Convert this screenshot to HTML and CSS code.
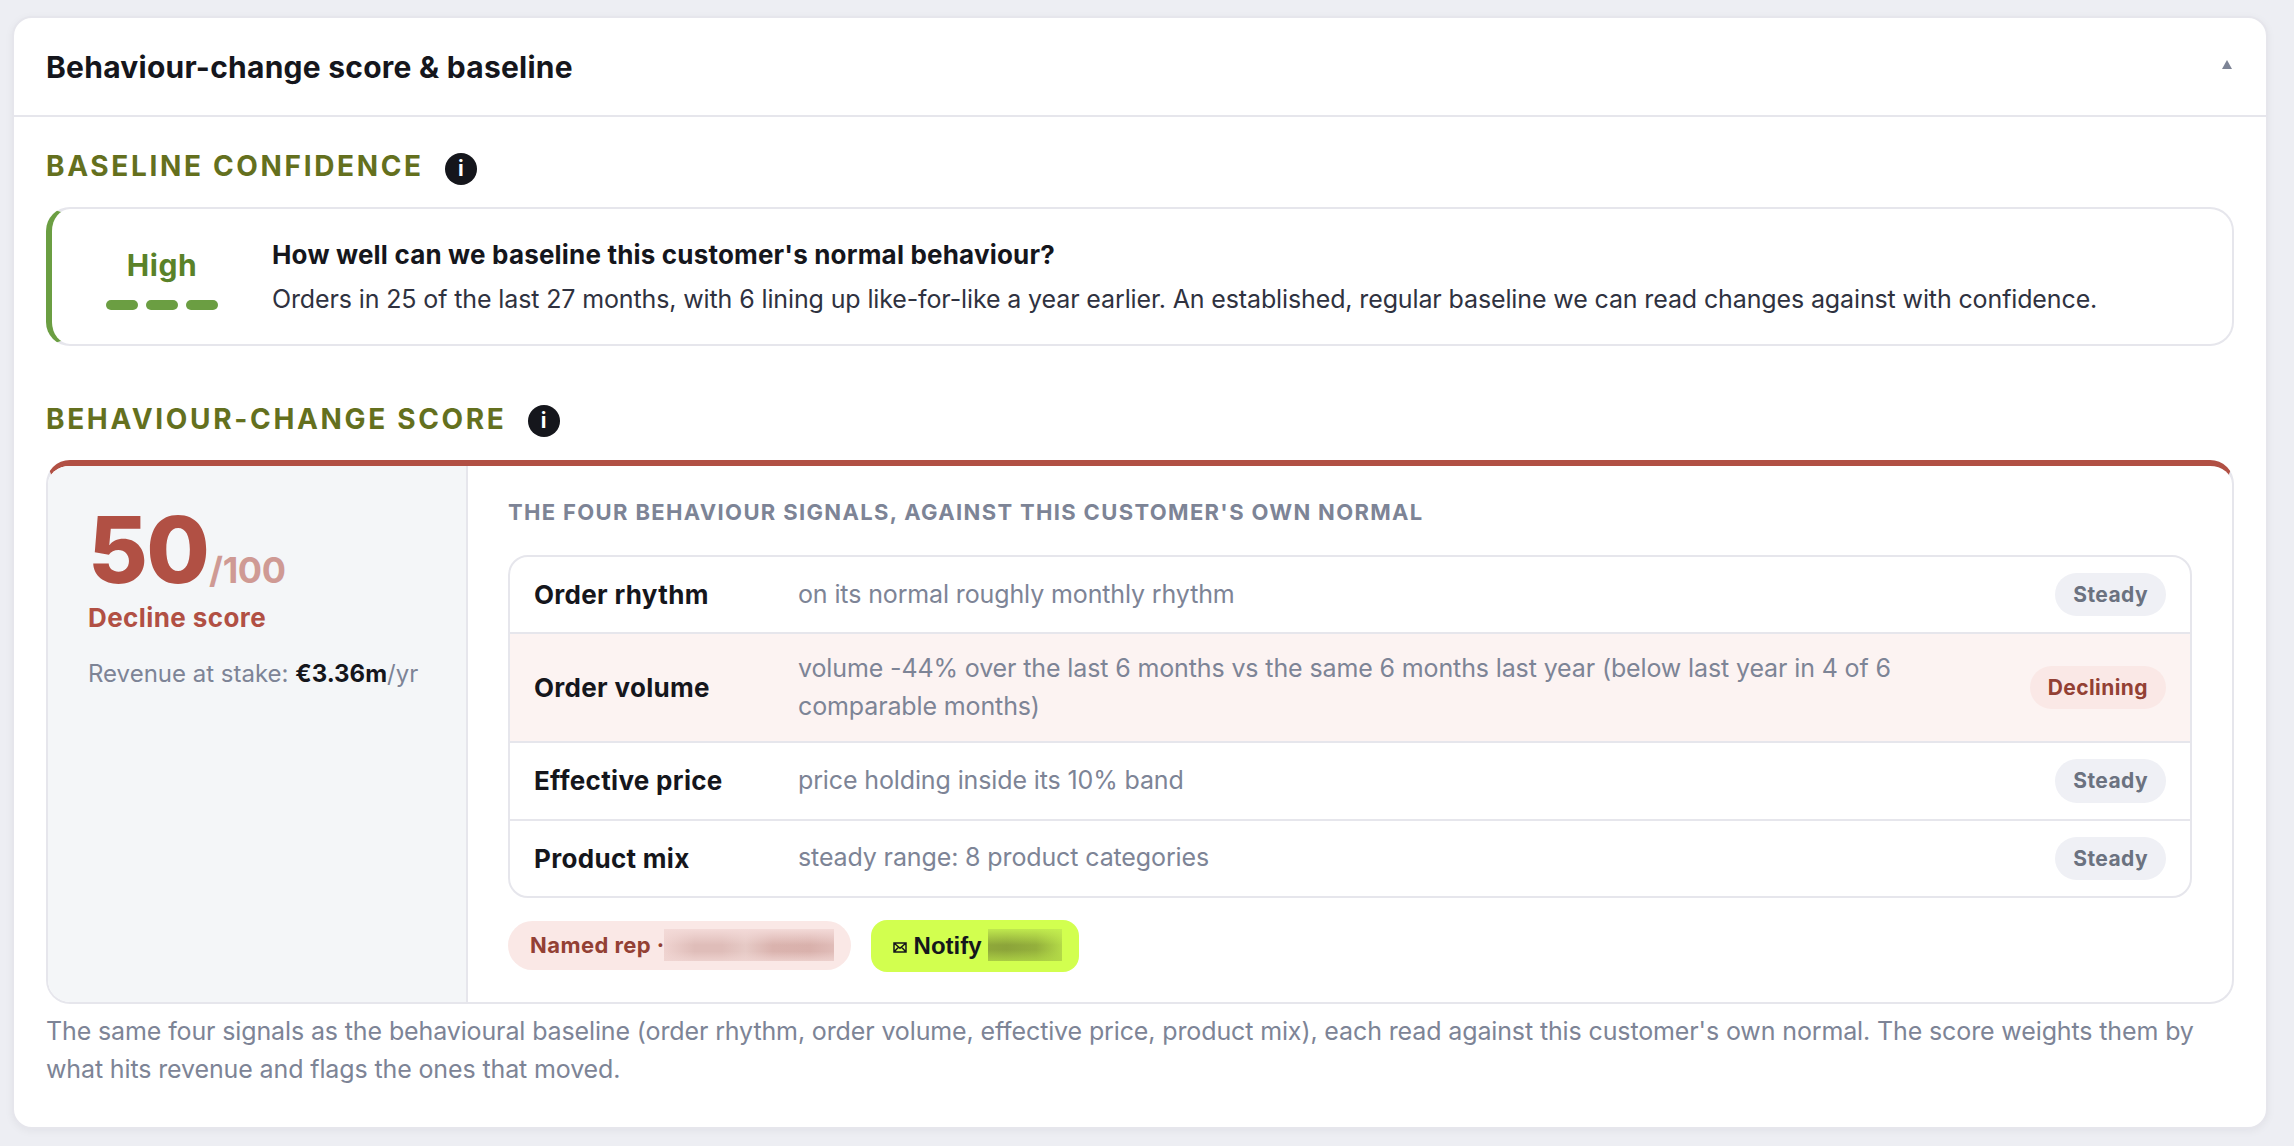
FILE: index.html
```
<!DOCTYPE html>
<html lang="en">
<head>
  <meta charset="UTF-8">
  <meta name="viewport" content="width=device-width, initial-scale=1.0">
  <title>Behaviour-change score &amp; baseline</title>
  <link rel="stylesheet" href="styles.css">
</head>
<body>
  <div class="card">
    <div class="card-header">
      <h2>Behaviour-change score &amp; baseline</h2>
      <svg class="caret" viewBox="0 0 10 9"><path d="M5 0L10 9H0z"/></svg>
    </div>

    <div class="card-content">
      <!-- Baseline confidence -->
      <div class="section-head">
        <h3>Baseline confidence</h3>
        <span class="info">i</span>
      </div>
      <div class="confidence">
        <div class="confidence-level">
          <span class="level-name">High</span>
          <div class="level-bars"><i></i><i></i><i></i></div>
        </div>
        <div class="confidence-text">
          <h4>How well can we baseline this customer's normal behaviour?</h4>
          <p>Orders in 25 of the last 27 months, with 6 lining up like-for-like a year earlier. An established, regular baseline we can read changes against with confidence.</p>
        </div>
      </div>

      <!-- Behaviour-change score -->
      <div class="section-head section-head-score">
        <h3>Behaviour-change score</h3>
        <span class="info">i</span>
      </div>
      <div class="score">
        <div class="score-side">
          <div class="score-value">50<span>/100</span></div>
          <div class="score-label">Decline score</div>
          <div class="score-stake">Revenue at stake: <b>€3.36m</b>/yr</div>
        </div>
        <div class="score-main">
          <h5>The four behaviour signals, against this customer's own normal</h5>
          <div class="signals">
            <div class="signal">
              <span class="signal-name">Order rhythm</span>
              <span class="signal-desc">on its normal roughly monthly rhythm</span>
              <span class="pill">Steady</span>
            </div>
            <div class="signal signal-down">
              <span class="signal-name">Order volume</span>
              <span class="signal-desc">volume -44% over the last 6 months vs the same 6 months last year (below last year in 4 of 6 comparable months)</span>
              <span class="pill pill-down">Declining</span>
            </div>
            <div class="signal">
              <span class="signal-name">Effective price</span>
              <span class="signal-desc">price holding inside its 10% band</span>
              <span class="pill">Steady</span>
            </div>
            <div class="signal">
              <span class="signal-name">Product mix</span>
              <span class="signal-desc">steady range: 8 product categories</span>
              <span class="pill">Steady</span>
            </div>
          </div>
          <div class="actions">
            <span class="rep">Named rep ·<span class="redacted redacted-rep"></span></span>
            <button class="notify">
              <svg class="mail" viewBox="0 0 14 11"><path d="M1 1h12v9H1zM1 1l6 5.2L13 1M1 10l4.6-5M13 10L8.4 5"/></svg>
              Notify
              <span class="redacted redacted-notify"></span>
            </button>
          </div>
        </div>
      </div>
      <p class="footnote">The same four signals as the behavioural baseline (order rhythm, order volume, effective price, product mix), each read against this customer's own normal. The score weights them by what hits revenue and flags the ones that moved.</p>
    </div>
  </div>
</body>
</html>
```
FILE: styles.css
```
* {
  box-sizing: border-box;
}

body {
  margin: 0;
  padding: 16px 26px 17px 12px;
  background: #edeef3;
  color: #15161c;
  font-family: Inter, "Liberation Sans", sans-serif;
  font-size: 25px;
  line-height: 1.5;
}

h2, h3, h4, h5, p {
  margin: 0;
}

.card {
  background: #fff;
  border: 2px solid #e6e6ec;
  border-radius: 20px;
  box-shadow: 0 2px 8px rgba(20, 22, 40, 0.05);
}

.card-header {
  display: flex;
  justify-content: space-between;
  align-items: center;
  height: 99px;
  padding: 0 34px 0 32px;
  border-bottom: 2px solid #e6e6ec;
}

.card-header h2 {
  padding-top: 2px;
  font-size: 30px;
  font-weight: 700;
  letter-spacing: 0.25px;
}

.caret {
  width: 10px;
  height: 9px;
  margin-bottom: 5px;
  fill: #7d8496;
}

.card-content {
  padding: 27px 32px 39px;
}

.section-head {
  display: flex;
  align-items: center;
  gap: 21px;
  height: 44px;
  margin-bottom: 19px;
}

.section-head-score {
  margin-top: 51px;
}

.section-head h3 {
  font-size: 28px;
  font-weight: 700;
  letter-spacing: 0.095em;
  text-transform: uppercase;
  color: #64701e;
}

.info {
  width: 32px;
  height: 32px;
  margin-top: 6px;
  border-radius: 50%;
  background: #15161c;
  color: #fff;
  font-size: 21px;
  font-weight: 700;
  line-height: 31px;
  text-align: center;
}

.section-head-score .info {
  margin-top: 4px;
}

.confidence {
  display: flex;
  align-items: center;
  gap: 36px;
  height: 139px;
  padding: 0 36px;
  border: 2px solid #e6e6ec;
  border-left: 6px solid #6b9e42;
  border-radius: 24px;
}

.confidence-level {
  display: flex;
  flex-direction: column;
  align-items: center;
  gap: 12px;
  width: 148px;
}

.level-name {
  font-size: 30px;
  font-weight: 700;
  letter-spacing: 0.02em;
  color: #5a8229;
}

.level-bars {
  display: flex;
  gap: 8px;
}

.level-bars i {
  width: 32px;
  height: 10px;
  border-radius: 5px;
  background: #6b9e42;
}

.confidence-text h4 {
  margin-bottom: 7px;
  font-size: 26px;
  font-weight: 700;
  letter-spacing: 0.007em;
}

.confidence-text p {
  letter-spacing: -0.005em;
  color: #2f3240;
}

.score {
  display: flex;
  height: 544px;
  border: 2px solid #e6e6ec;
  border-top: 6px solid #b15044;
  border-radius: 24px;
  overflow: hidden;
}

.score-side {
  width: 420px;
  padding: 38px 40px;
  border-right: 2px solid #e6e6ec;
  background: #f4f6f8;
}

.score-value {
  height: 92px;
  margin-bottom: 2px;
  font-size: 92px;
  font-weight: 800;
  line-height: 1;
  letter-spacing: -0.02em;
  color: #b15044;
}

.score-value span {
  margin-left: 1px;
  font-size: 36px;
  font-weight: 700;
  letter-spacing: -0.3px;
  opacity: 0.55;
}

.score-label {
  margin-bottom: 19px;
  font-size: 26px;
  font-weight: 700;
  letter-spacing: 0.016em;
  color: #b15044;
}

.score-stake {
  font-size: 24px;
  color: #7d8496;
  white-space: nowrap;
}

.score-stake b {
  color: #15161c;
}

.score-main {
  flex: 1;
  padding: 30px 40px 30px;
}

.score-main h5 {
  margin-bottom: 26px;
  font-size: 22px;
  font-weight: 700;
  letter-spacing: 0.061em;
  text-transform: uppercase;
  color: #7d8496;
}

.signals {
  border: 2px solid #e6e6ec;
  border-radius: 20px;
  overflow: hidden;
}

.signal {
  display: grid;
  grid-template-columns: 240px 1fr auto;
  gap: 24px;
  align-items: center;
  padding: 16px 24px;
}

.signal + .signal {
  border-top: 2px solid #e6e6ec;
}

.signal-down {
  background: #fcf3f2;
}

.signal-name {
  font-size: 26px;
  font-weight: 700;
  line-height: 39px;
  letter-spacing: 0.012em;
}

.signal-desc {
  letter-spacing: -0.005em;
  color: #7d8496;
}

.pill {
  padding: 6px 18px;
  border-radius: 22px;
  background: #eff0f5;
  color: #6b7280;
  font-size: 21px;
  font-weight: 700;
  line-height: 31.3px;
  letter-spacing: 0.02em;
}

.pill-down {
  background: #fae8e6;
  color: #934034;
}

.actions {
  display: flex;
  align-items: center;
  gap: 20px;
  height: 52px;
  margin-top: 22px;
}

.rep {
  display: flex;
  align-items: center;
  height: 49px;
  padding: 0 17px 0 22px;
  border-radius: 25px;
  background: #fae8e6;
  color: #934034;
  font-size: 22px;
  font-weight: 700;
  letter-spacing: 0.02em;
}

.notify {
  display: flex;
  align-items: center;
  height: 52px;
  padding: 0 17px 0 22px;
  border: none;
  border-radius: 16px;
  background: #d2ff4f;
  color: #15161c;
  font-family: "Liberation Sans", Arial, sans-serif;
  font-size: 24px;
  font-weight: 700;
}

.mail {
  width: 14px;
  height: 11px;
  margin: 4px 7px 0 0;
  fill: none;
  stroke: #15161c;
  stroke-width: 1.5;
}

/* names are hidden behind a smudged patch */
.redacted {
  height: 32px;
  margin-bottom: 2px;
}

.redacted-rep {
  width: 170px;
  margin-left: -1px;
  background:
    linear-gradient(to bottom, #f3dad8 0%, rgba(243, 218, 216, 0) 50%, rgba(243, 218, 216, 0) 70%, rgba(240, 214, 211, 0.8) 100%),
    linear-gradient(to right, #efd3d0 0%, #dfbdb9 18%, #dfbdb9 34%, #e6cac6 48%, #dab3ae 64%, #d9b1ac 86%, #e0bcb8 100%);
}

.redacted-notify {
  width: 74px;
  margin-left: 6px;
  background:
    linear-gradient(to bottom, rgba(197, 240, 80, 0.9) 0%, rgba(190, 230, 75, 0) 50%, rgba(190, 230, 75, 0) 65%, rgba(178, 216, 70, 0.8) 100%),
    linear-gradient(to right, #8fa83a 0%, #8ca43a 25%, #94b03c 65%, #b4da48 100%);
}

.footnote {
  margin-top: 9px;
  letter-spacing: -0.005em;
  color: #7d8496;
}
```
